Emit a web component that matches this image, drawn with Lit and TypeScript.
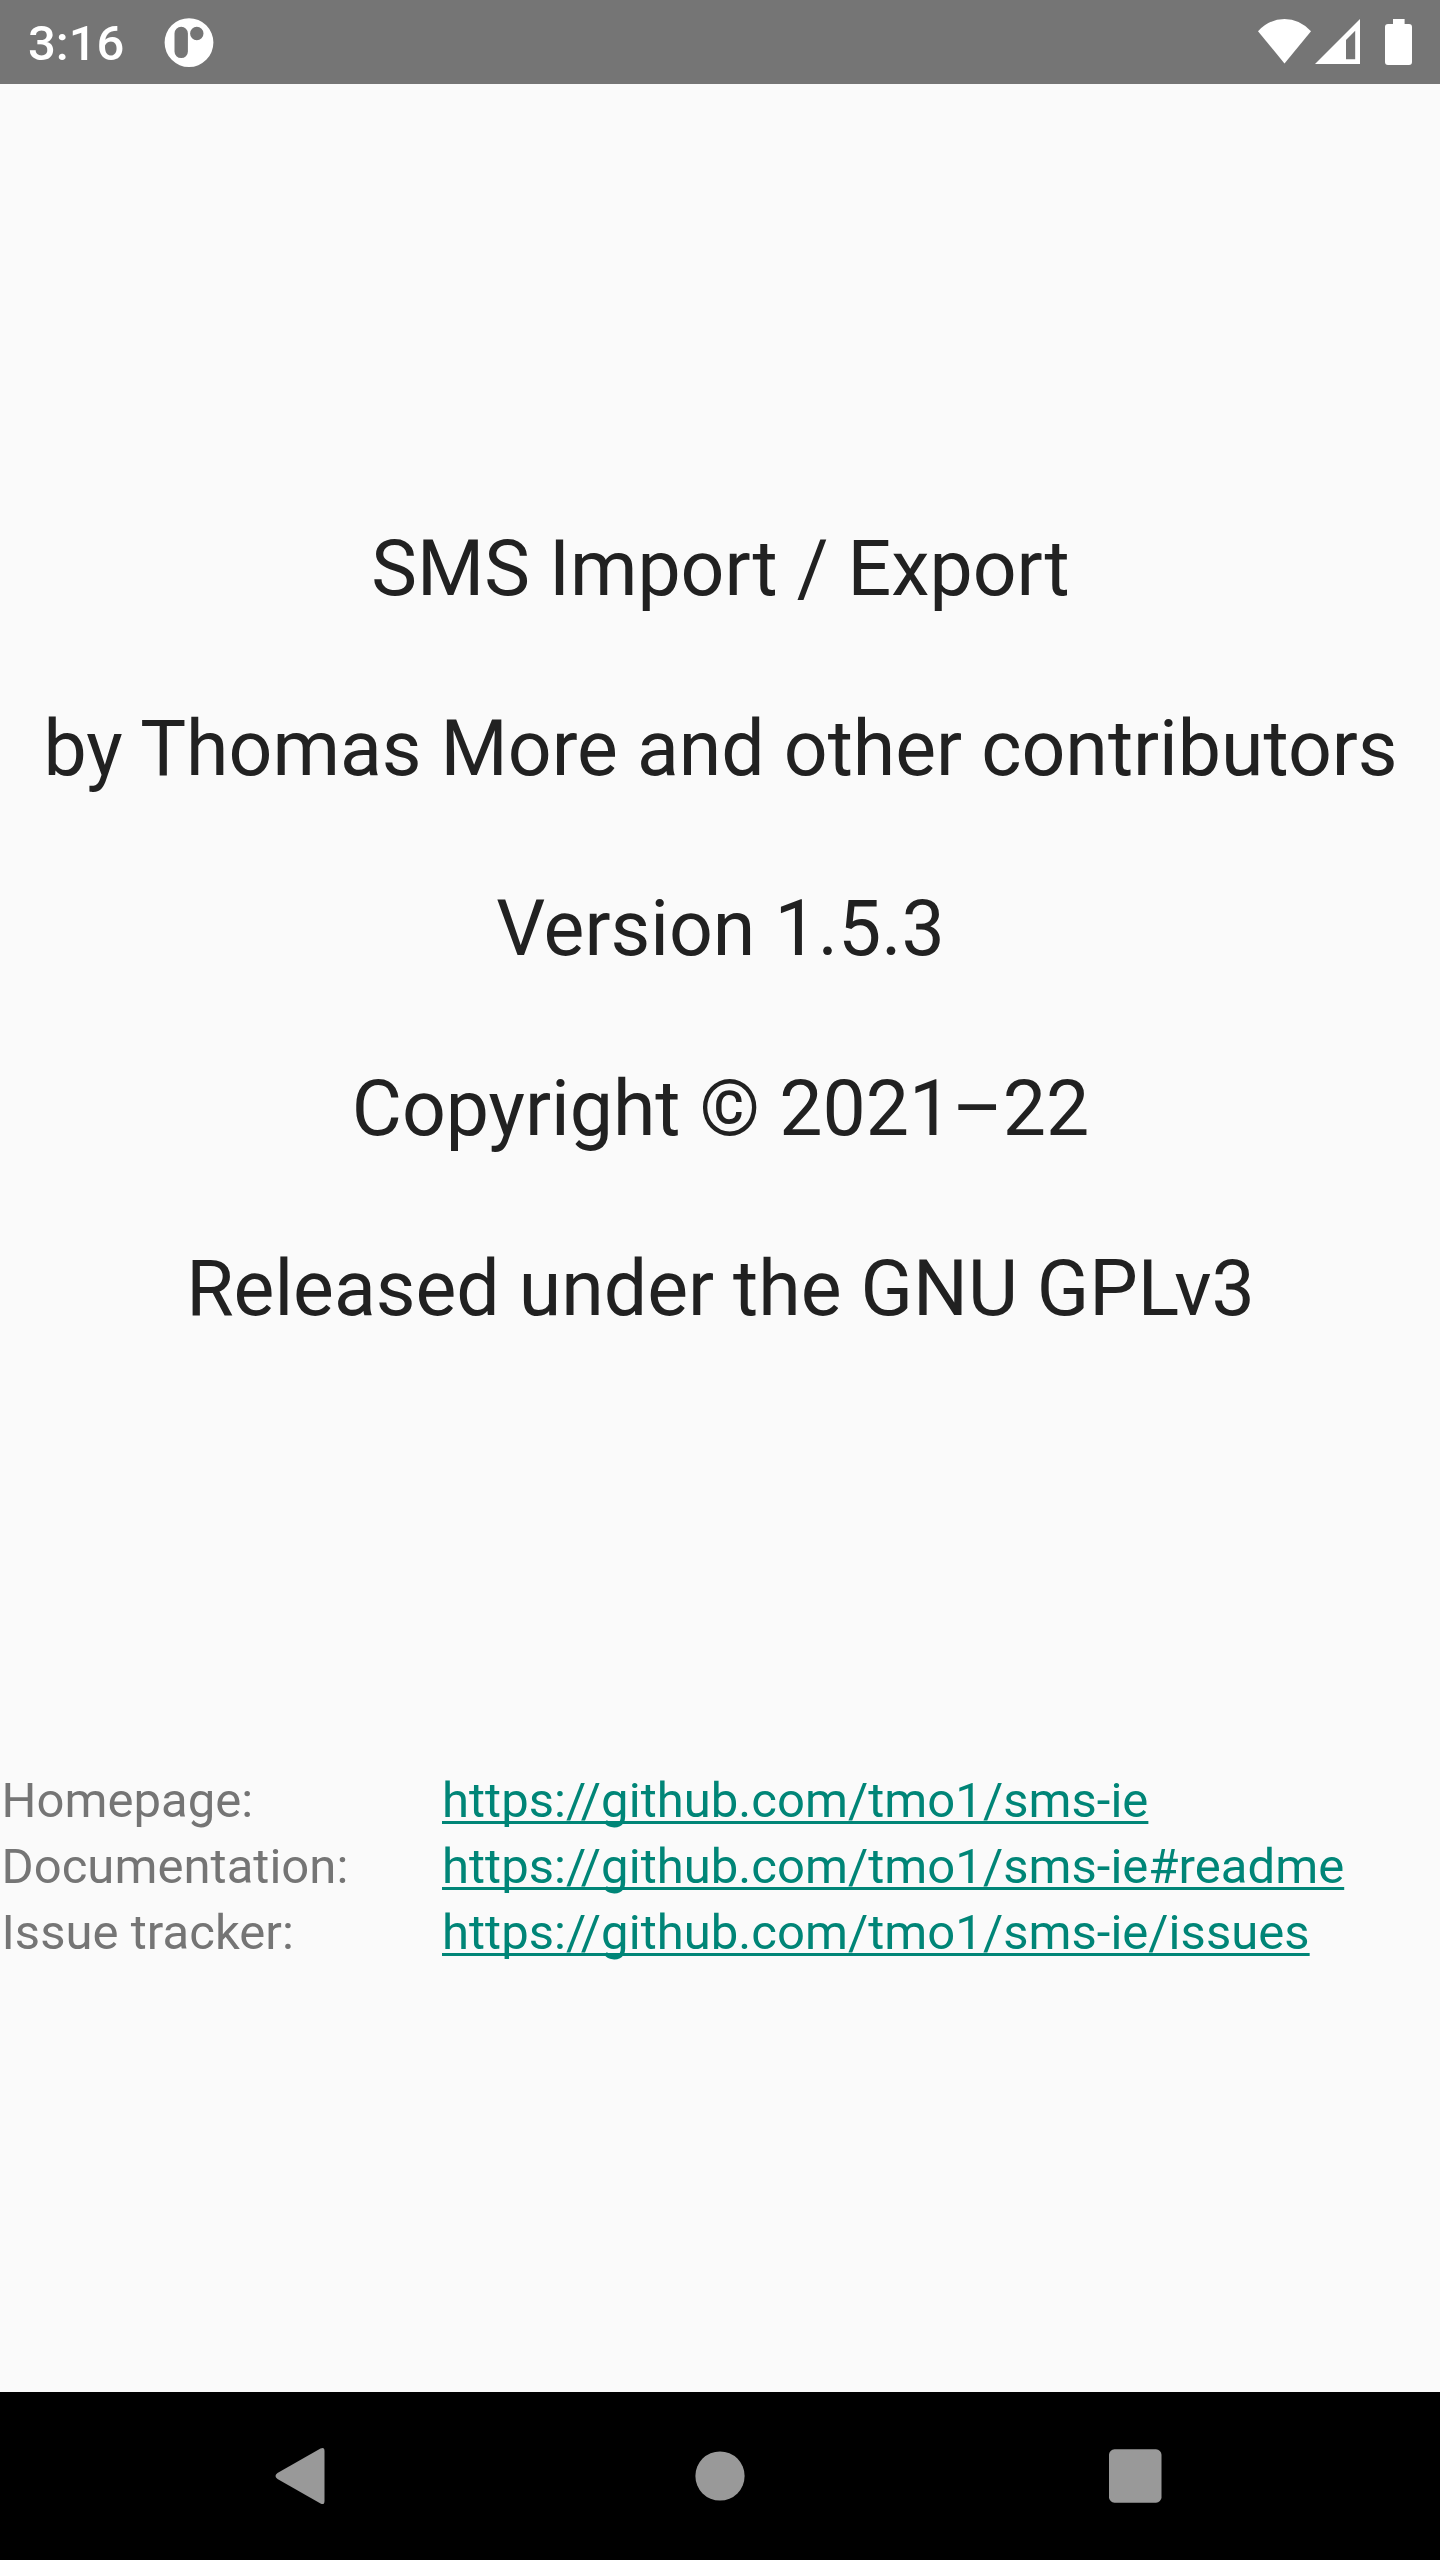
import { LitElement, html, css, svg } from "lit";
import { customElement } from "lit/decorators.js";

const ABOUT_LINES = [
  "SMS Import / Export",
  "by Thomas More and other contributors",
  "Version 1.5.3",
  "Copyright © 2021–22",
  "Released under the GNU GPLv3",
];

const LINKS = [
  { label: "Homepage:", url: "https://github.com/tmo1/sms-ie" },
  { label: "Documentation:", url: "https://github.com/tmo1/sms-ie#readme" },
  { label: "Issue tracker:", url: "https://github.com/tmo1/sms-ie/issues" },
];

@customElement("status-bar")
class StatusBar extends LitElement {
  static styles = css`
    :host {
      display: flex;
      align-items: center;
      justify-content: space-between;
      height: 84px;
      background: #757575;
      color: #fff;
    }
    .left {
      display: flex;
      align-items: center;
      padding-left: 28px;
      gap: 39.500px;
    }
    .time {
      font: 500 49px/84px Roboto, sans-serif;
      padding-top: 3px;
    }
    svg {
      display: block;
      fill: #fff;
    }
  `;
  render() {
    return html`
      <div class="left">
        <span class="time">3:16</span>
        <svg width="50" height="84" viewBox="0 0 50 84">
          <path
            fill-rule="evenodd"
            d="M25 18.2a24.4 24.4 0 1 0 0 48.8a24.4 24.4 0 1 0 0-48.8zM17.2 26.7a6.7 6.7 0 0 1 6.7 6.7v18a6.7 6.7 0 0 1-13.4 0v-18a6.7 6.7 0 0 1 6.7-6.7zM32.8 26.8a6.7 6.7 0 1 1 0 13.4a6.7 6.7 0 1 1 0-13.4z"
          />
        </svg>
      </div>
      <svg width="190" height="84" viewBox="1250 0 190 84">
        <path d="M1258 31.2Q1269.500 19 1284.500 19T1311 31.200L1284.500 63.500z" />
        <path fill-rule="evenodd" d="M1360 19V64H1315zM1346 40V59.200H1355.200V30.700z" />
        <path
          d="M1393 19h11.600v5h4.400a3 3 0 0 1 3 3v35a3 3 0 0 1-3 3h-21a3 3 0 0 1-3-3v-35a3 3 0 0 1 3-3h5z"
        />
      </svg>
    `;
  }
}

@customElement("nav-bar")
class NavBar extends LitElement {
  static styles = css`
    :host {
      display: flex;
      justify-content: center;
      height: 168px;
      background: #000;
    }
    .buttons {
      display: flex;
      gap: 247px;
    }
    svg {
      display: block;
      fill: #999;
    }
  `;
  render() {
    const shapes = [
      svg`<path d="M57.500 56.500Q61.500 54.500 61.500 59V109Q61.500 113.500 57.500 111.500L14.500 87Q10.500 84 14.500 81z" />`,
      svg`<circle cx="42" cy="84" r="24.600" />`,
      svg`<rect x="16" y="57.300" width="52.500" height="53.400" rx="5.500" />`,
    ];
    return html`<div class="buttons">
      ${shapes.map(
        (s) => html`<svg width="168" height="168" viewBox="-42 0 168 168">${s}</svg>`
      )}
    </div>`;
  }
}

@customElement("app-root")
class AppRoot extends LitElement {
  static styles = css`
    :host {
      display: flex;
      flex-direction: column;
      height: 2560px;
      background: #fafafa;
      font-family: Roboto, sans-serif;
    }
    .content {
      flex: 1;
      padding-top: 395px;
    }
    .about {
      padding-left: 1px;
      text-align: center;
      font-size: 77px;
      line-height: 180px;
      letter-spacing: -0.020px;
      color: #212121;
    }
    .line {
      white-space: nowrap;
    }
    .links {
      display: grid;
      grid-template-columns: 442px 1fr;
      margin-top: 389px;
      font-size: 49px;
      line-height: 66px;
      letter-spacing: 0.040px;
      color: #757575;
    }
    .label {
      padding-left: 1.500px;
    }
    .link {
      color: #008577;
      justify-self: start;
      text-decoration: underline;
      text-decoration-skip-ink: none;
      text-decoration-thickness: 2.500px;
      text-underline-offset: 3.600px;
    }
  `;
  render() {
    return html`
      <status-bar></status-bar>
      <div class="content">
        <div class="about">
          ${ABOUT_LINES.map((t) => html`<div class="line">${t}</div>`)}
        </div>
        <div class="links">
          ${LINKS.map(
            (l) =>
              html`<span class="label">${l.label}</span><a class="link" href=${l.url}>${l.url}</a>`
          )}
        </div>
      </div>
      <nav-bar></nav-bar>
    `;
  }
}
